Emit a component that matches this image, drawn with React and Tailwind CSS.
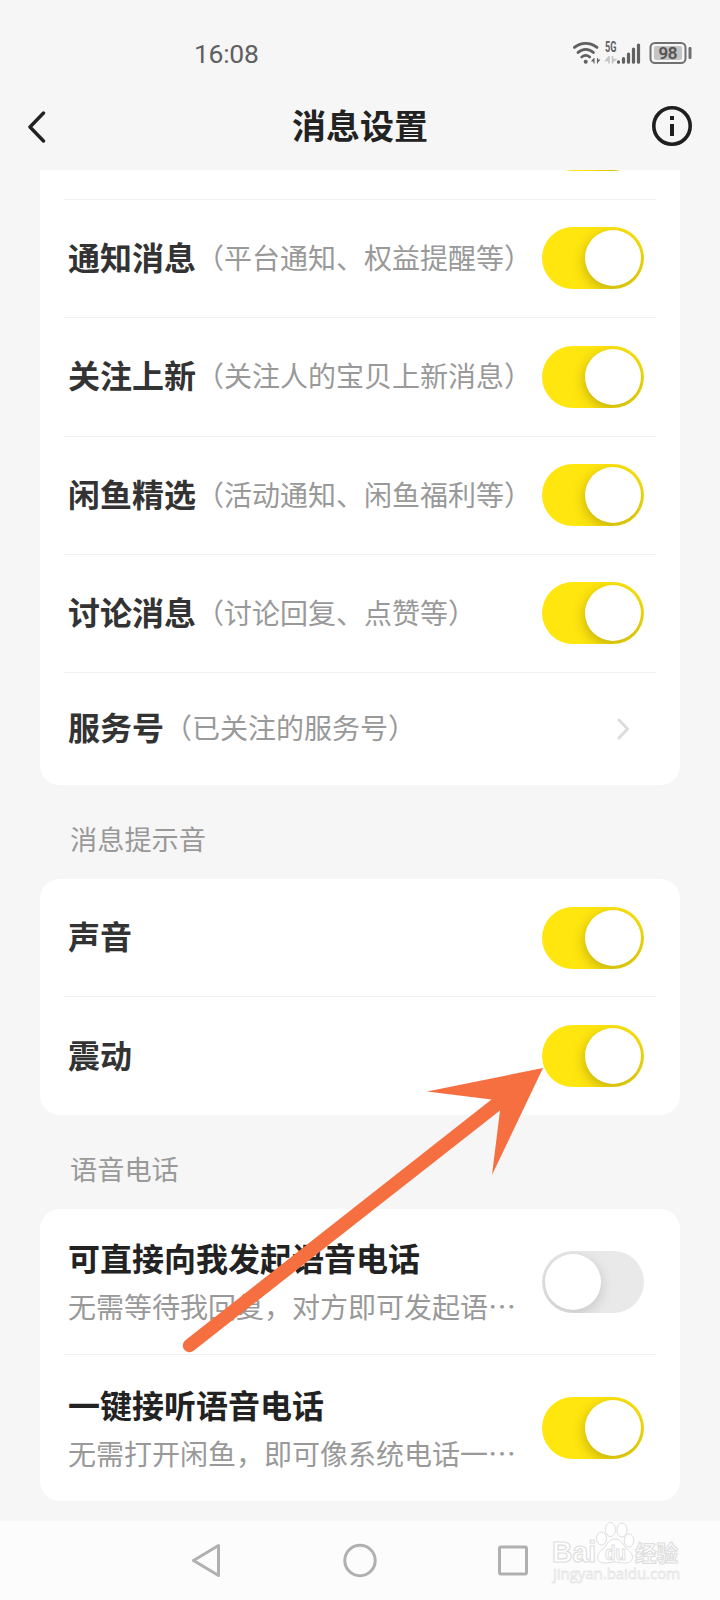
import React, { useState } from "react";

const MESSAGE_ROWS = [
  { id: "notice", title: "通知消息", hint: "（平台通知、权益提醒等）" },
  { id: "follow", title: "关注上新", hint: "（关注人的宝贝上新消息）" },
  { id: "picks", title: "闲鱼精选", hint: "（活动通知、闲鱼福利等）" },
  { id: "discuss", title: "讨论消息", hint: "（讨论回复、点赞等）" },
];

const CALL_ROWS = [
  { id: "directCall", title: "可直接向我发起语音电话", hint: "无需等待我回复，对方即可发起语…" },
  { id: "quickAnswer", title: "一键接听语音电话", hint: "无需打开闲鱼，即可像系统电话一…" },
];

function Toggle({ on, onClick }) {
  return (
    <button
      type="button"
      role="switch"
      aria-checked={on}
      onClick={onClick}
      className={`flex h-[62px] w-[102px] shrink-0 items-center overflow-hidden rounded-full px-[3px] ${
        on ? "justify-end bg-[#ffe60f]" : "justify-start bg-[#e9e9e9]"
      }`}
    >
      <span
        className={`size-14 rounded-full bg-white ${
          on ? "shadow-[0_4px_14px_rgba(0,0,0,0.26)]" : "shadow-[0_4px_14px_rgba(0,0,0,0.16)]"
        }`}
      />
    </button>
  );
}

function StatusBar() {
  return (
    <div className="flex h-[84px] items-center justify-between pt-[22px] pr-[28px] pl-[194px] font-[Roboto,sans-serif]">
      <span className="pt-[2px] text-[26.500px] leading-none tracking-[-0.300px] text-[#606060]">16:08</span>
      <div className="flex items-center">
        <svg width="28" height="24" viewBox="0 0 28 24" fill="none" stroke="#606060" strokeWidth="2.8" strokeLinecap="round">
          <path d="M2.4 6.4C9 .9 18.4.9 25 6.4" />
          <path d="M6 11.500c4.6-4.2 10.800-4.200 15.400 0" />
          <path d="M9.700 16c2.500-2 5.500-2 8 0" />
          <circle cx="13.700" cy="20.800" r="2" fill="#606060" stroke="none" />
          <path d="M22 17.500v4.500M22 17.500l-2 2.500h2M25.500 22V17.500M25.500 21l2-2h-2" strokeWidth="1.100" />
        </svg>
        <svg width="37" height="24" viewBox="0 0 37 24" className="ml-[3px] overflow-visible">
          <text x="2" y="11" fontSize="14" fontWeight="700" textLength="11.500" lengthAdjust="spacingAndGlyphs" fill="#606060">
            5G
          </text>
          <path d="M6 15v7.500M6 15.500L3 19.500h3M9.500 22.500V15M9.500 21l3-2.500h-3" stroke="#c4c4c4" strokeWidth="1.600" fill="none" />
          <g stroke="#606060" strokeWidth="3.200" strokeLinecap="round">
            <path d="M15.500 20.900v.3M20.500 17.600v3.600M25.500 13v8.200M30.500 8v13.200M35.500 4v17.200" />
          </g>
        </svg>
        <svg width="44" height="24" viewBox="0 0 44 24" className="ml-2">
          <rect x="2.500" y="2" width="35" height="20" rx="4.500" fill="none" stroke="#707070" strokeWidth="2" />
          <rect x="6" y="5" width="28" height="14" rx="2" fill="#c4c4c4" />
          <text x="20" y="18" fontSize="17" fontWeight="500" textLength="19" lengthAdjust="spacing" textAnchor="middle" fill="#555" stroke="#555" strokeWidth="0.300">
            98
          </text>
          <rect x="40.500" y="6" width="3" height="12" rx="1.200" fill="#707070" />
        </svg>
      </div>
    </div>
  );
}

function Header() {
  return (
    <header className="flex h-[86px] items-center justify-between pr-[27px] pb-[2px] pl-[27px]">
      <svg width="42" height="34" viewBox="0 0 42 34" fill="none" stroke="#222" strokeWidth="3.400" strokeLinecap="round" strokeLinejoin="round">
        <path d="M16.500 4L3 18L16.500 32" />
      </svg>
      <h1 className="pb-[2px] text-[34px] leading-none font-bold text-[#222]">消息设置</h1>
      <svg width="42" height="42" viewBox="0 0 42 42">
        <circle cx="21" cy="21" r="18.200" fill="none" stroke="#1f1f1f" strokeWidth="3.600" />
        <rect x="19" y="11" width="4" height="4" fill="#1f1f1f" />
        <rect x="19" y="19" width="4" height="12" fill="#1f1f1f" />
      </svg>
    </header>
  );
}

function Title({ children }) {
  return <span className="pb-[5px] text-[32px] leading-none font-bold text-[#333]">{children}</span>;
}

function Hint({ children }) {
  return <span className="pb-[3px] text-[28px] leading-none text-[#999]">{children}</span>;
}

function SectionLabel({ children }) {
  return <h2 className="flex h-[94px] items-center pt-[18px] pb-1 pl-[70px] text-[27.200px] leading-none text-[#999]">{children}</h2>;
}

function NavBar() {
  return (
    <nav className="flex h-[79px] items-start justify-between bg-[#fcfcfc] pt-[21px] pr-[190px] pl-[190px]">
      <svg width="34" height="38" viewBox="0 0 34 38" fill="none" stroke="#b0b0b0" strokeWidth="3" strokeLinejoin="round">
        <path d="M28.500 3.500v30L3.500 18.500z" />
      </svg>
      <svg width="38" height="38" viewBox="0 0 38 38" fill="none" stroke="#b0b0b0" strokeWidth="3">
        <circle cx="19" cy="18.500" r="15.200" />
      </svg>
      <svg width="34" height="38" viewBox="0 0 34 38" fill="none" stroke="#b0b0b0" strokeWidth="3">
        <rect x="3.500" y="5" width="27" height="27" rx="1.500" />
      </svg>
    </nav>
  );
}

function Watermark() {
  return (
    <svg width="136" height="66" viewBox="0 0 136 66" className="absolute top-[1520px] left-[550px] overflow-visible" fill="#fff" stroke="#dedede">
      <g fontWeight="700" strokeWidth="1.200">
        <text x="2" y="42" fontSize="30" textLength="44" lengthAdjust="spacingAndGlyphs" className="font-[Liberation_Sans]">
          Bai
        </text>
        <text x="85" y="41" fontSize="22" textLength="43" lengthAdjust="spacingAndGlyphs">
          经验
        </text>
      </g>
      <ellipse cx="51.500" cy="18.500" rx="5" ry="6.500" />
      <ellipse cx="60.500" cy="9.500" rx="5" ry="7" />
      <ellipse cx="72" cy="10" rx="5" ry="7" />
      <ellipse cx="79" cy="20.500" rx="4.800" ry="6.500" />
      <path d="M65 19c-6 0-8 6-12 10-8 6-7 14 2 14 4 0 6-1 10-1s6 1 10 1c9 0 10-8 2-14-4-4-6-10-12-10z" />
      <text x="55" y="39.500" fontSize="20" fontWeight="700" textLength="21" lengthAdjust="spacingAndGlyphs" className="font-[Liberation_Sans]">
        du
      </text>
      <text x="3" y="59" fontSize="15" stroke="#e6e6e6" strokeWidth="0.800" textLength="127" lengthAdjust="spacingAndGlyphs" className="font-[Open_Sans]">
        jingyan.baidu.com
      </text>
    </svg>
  );
}

export default function App() {
  const [settings, setSettings] = useState({
    chat: true,
    notice: true,
    follow: true,
    picks: true,
    discuss: true,
    sound: true,
    vibrate: true,
    directCall: false,
    quickAnswer: true,
  });

  const toggle = (id) => setSettings((s) => ({ ...s, [id]: !s[id] }));

  return (
    <div lang="zh-CN" className="relative h-[1600px] w-[720px] overflow-hidden bg-[#f6f6f6] font-['Noto_Sans_CJK_SC',sans-serif]">
      <StatusBar />
      <Header />

      <main>
        <section className="mx-10 h-[615px] overflow-hidden rounded-b-[20px] bg-white px-6">
          {/* row scrolled almost out of view under the header */}
          <div className="-mt-[89.400px] flex h-[118.400px] items-center justify-end pr-3">
            <Toggle on={settings.chat} onClick={() => toggle("chat")} />
          </div>
          {MESSAGE_ROWS.map((row) => (
            <div key={row.id} className="flex h-[118.350px] items-center justify-between border-t border-[#f1f1f1] pr-3 pb-[0.500px] pl-1">
              <div className="flex items-center whitespace-nowrap">
                <Title>{row.title}</Title>
                <Hint>{row.hint}</Hint>
              </div>
              <Toggle on={settings[row.id]} onClick={() => toggle(row.id)} />
            </div>
          ))}
          <div className="flex h-28 items-center justify-between border-t border-[#f1f1f1] pr-6 pl-1">
            <div className="flex items-center whitespace-nowrap">
              <Title>服务号</Title>
              <Hint>（已关注的服务号）</Hint>
            </div>
            <svg width="18" height="24" viewBox="0 0 18 24" fill="none" stroke="#dcdcdc" strokeWidth="3" strokeLinecap="round">
              <path d="M5 3L13.500 12L5 21" />
            </svg>
          </div>
        </section>

        <SectionLabel>消息提示音</SectionLabel>
        <section className="mx-10 h-[236px] rounded-[20px] bg-white px-6">
          <div className="flex h-[117px] items-center justify-between pr-3 pl-1">
            <Title>声音</Title>
            <Toggle on={settings.sound} onClick={() => toggle("sound")} />
          </div>
          <div className="flex h-[119px] items-center justify-between border-t border-[#f1f1f1] pr-3 pl-1">
            <Title>震动</Title>
            <Toggle on={settings.vibrate} onClick={() => toggle("vibrate")} />
          </div>
        </section>

        <SectionLabel>语音电话</SectionLabel>
        <section className="mx-10 mb-5 h-[292px] divide-y divide-[#f1f1f1] rounded-[20px] bg-white px-6">
          {CALL_ROWS.map((row) => (
            <div key={row.id} className="flex h-[146px] items-center justify-between pr-3 pl-1">
              <div className="flex flex-col gap-[19px] pb-[2px] whitespace-nowrap">
                <span className="text-[32px] leading-none font-bold text-[#222]">{row.title}</span>
                <span className="text-[28px] leading-none text-[#999]">{row.hint}</span>
              </div>
              <Toggle on={settings[row.id]} onClick={() => toggle(row.id)} />
            </div>
          ))}
        </section>
      </main>

      <NavBar />
      <Watermark />

      {/* pointer to the vibration switch */}
      <svg width="380" height="300" viewBox="0 0 380 300" className="pointer-events-none absolute top-[1060px] left-[175px]" fill="#f66f41">
        <path d="M368 8L252 31.500L316.500 39.500L10.400 280.200A6.700 6.700 0 0 0 18.600 290.800L325 50.500L317 115z" />
      </svg>
    </div>
  );
}
